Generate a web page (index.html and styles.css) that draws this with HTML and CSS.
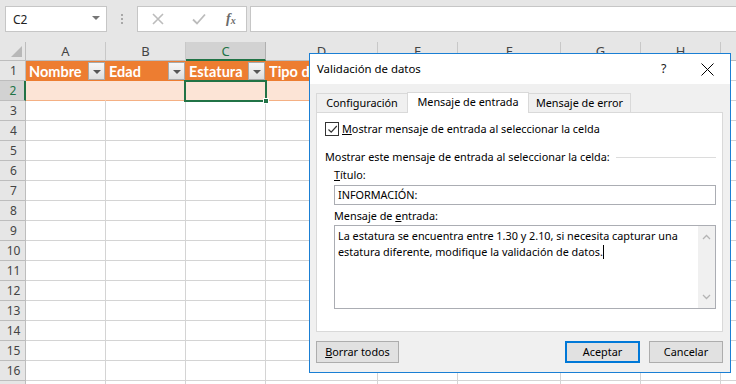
FILE: index.html
```html
<!DOCTYPE html>
<html lang="es">
<head>
<meta charset="utf-8">
<title>Validación de datos</title>
<link rel="stylesheet" href="styles.css">
</head>
<body>
<div class="app">
  <div class="toolbar">
    <div class="namebox"><span>C2</span><span class="nb-arrow"></span></div>
    <div class="dots"><i></i><i></i><i></i></div>
    <div class="fxbox">
      <svg class="ic-x" width="12" height="12" viewBox="0 0 12 12"><path d="M1 1L11 11M11 1L1 11" stroke="#bcbcbc" stroke-width="1.6" fill="none"/></svg>
      <svg class="ic-ok" width="14" height="12" viewBox="0 0 14 12"><path d="M1 6.5L5 10.5L13 1.5" stroke="#bcbcbc" stroke-width="1.8" fill="none"/></svg>
      <span class="fx">f<sub>x</sub></span>
    </div>
    <div class="formula"></div>
  </div>

  <div class="sheet">
    <div class="row hdr">
      <div class="rh corner"><span class="tri"></span></div>
      <div class="c ca">A</div><div class="c cb">B</div><div class="c cc sel">C</div><div class="c cd">D</div><div class="c ce">E</div><div class="c cf">F</div><div class="c cg">G</div><div class="c chh">H</div><div class="c ci"></div>
    </div>
    <div class="row r1">
      <div class="rh">1</div>
      <div class="c ca th"><span>Nombre</span><span class="fbtn"></span></div>
      <div class="c cb th"><span>Edad</span><span class="fbtn"></span></div>
      <div class="c cc th"><span>Estatura</span><span class="fbtn"></span></div>
      <div class="c cd th"><span>Tipo de</span><span class="fbtn"></span></div>
      <div class="c ce"></div><div class="c cf"></div><div class="c cg"></div><div class="c chh"></div><div class="c ci"></div>
    </div>
    <div class="row r2">
      <div class="rh rsel">2</div>
      <div class="c ca td"></div><div class="c cb td"></div><div class="c cc td"></div><div class="c cd td"></div>
      <div class="c ce"></div><div class="c cf"></div><div class="c cg"></div><div class="c chh"></div><div class="c ci"></div>
    </div>
    <div class="row"><div class="rh">3</div><div class="c ca"></div><div class="c cb"></div><div class="c cc"></div><div class="c cd"></div><div class="c ce"></div><div class="c cf"></div><div class="c cg"></div><div class="c chh"></div><div class="c ci"></div></div>
    <div class="row"><div class="rh">4</div><div class="c ca"></div><div class="c cb"></div><div class="c cc"></div><div class="c cd"></div><div class="c ce"></div><div class="c cf"></div><div class="c cg"></div><div class="c chh"></div><div class="c ci"></div></div>
    <div class="row"><div class="rh">5</div><div class="c ca"></div><div class="c cb"></div><div class="c cc"></div><div class="c cd"></div><div class="c ce"></div><div class="c cf"></div><div class="c cg"></div><div class="c chh"></div><div class="c ci"></div></div>
    <div class="row"><div class="rh">6</div><div class="c ca"></div><div class="c cb"></div><div class="c cc"></div><div class="c cd"></div><div class="c ce"></div><div class="c cf"></div><div class="c cg"></div><div class="c chh"></div><div class="c ci"></div></div>
    <div class="row"><div class="rh">7</div><div class="c ca"></div><div class="c cb"></div><div class="c cc"></div><div class="c cd"></div><div class="c ce"></div><div class="c cf"></div><div class="c cg"></div><div class="c chh"></div><div class="c ci"></div></div>
    <div class="row"><div class="rh">8</div><div class="c ca"></div><div class="c cb"></div><div class="c cc"></div><div class="c cd"></div><div class="c ce"></div><div class="c cf"></div><div class="c cg"></div><div class="c chh"></div><div class="c ci"></div></div>
    <div class="row"><div class="rh">9</div><div class="c ca"></div><div class="c cb"></div><div class="c cc"></div><div class="c cd"></div><div class="c ce"></div><div class="c cf"></div><div class="c cg"></div><div class="c chh"></div><div class="c ci"></div></div>
    <div class="row"><div class="rh">10</div><div class="c ca"></div><div class="c cb"></div><div class="c cc"></div><div class="c cd"></div><div class="c ce"></div><div class="c cf"></div><div class="c cg"></div><div class="c chh"></div><div class="c ci"></div></div>
    <div class="row"><div class="rh">11</div><div class="c ca"></div><div class="c cb"></div><div class="c cc"></div><div class="c cd"></div><div class="c ce"></div><div class="c cf"></div><div class="c cg"></div><div class="c chh"></div><div class="c ci"></div></div>
    <div class="row"><div class="rh">12</div><div class="c ca"></div><div class="c cb"></div><div class="c cc"></div><div class="c cd"></div><div class="c ce"></div><div class="c cf"></div><div class="c cg"></div><div class="c chh"></div><div class="c ci"></div></div>
    <div class="row"><div class="rh">13</div><div class="c ca"></div><div class="c cb"></div><div class="c cc"></div><div class="c cd"></div><div class="c ce"></div><div class="c cf"></div><div class="c cg"></div><div class="c chh"></div><div class="c ci"></div></div>
    <div class="row"><div class="rh">14</div><div class="c ca"></div><div class="c cb"></div><div class="c cc"></div><div class="c cd"></div><div class="c ce"></div><div class="c cf"></div><div class="c cg"></div><div class="c chh"></div><div class="c ci"></div></div>
    <div class="row"><div class="rh">15</div><div class="c ca"></div><div class="c cb"></div><div class="c cc"></div><div class="c cd"></div><div class="c ce"></div><div class="c cf"></div><div class="c cg"></div><div class="c chh"></div><div class="c ci"></div></div>
    <div class="row"><div class="rh">16</div><div class="c ca"></div><div class="c cb"></div><div class="c cc"></div><div class="c cd"></div><div class="c ce"></div><div class="c cf"></div><div class="c cg"></div><div class="c chh"></div><div class="c ci"></div></div>
    <div class="row"><div class="rh"></div><div class="c ca"></div><div class="c cb"></div><div class="c cc"></div><div class="c cd"></div><div class="c ce"></div><div class="c cf"></div><div class="c cg"></div><div class="c chh"></div><div class="c ci"></div></div>

    <div class="active"><span class="handle"></span></div>
  </div>

  <div class="dialog">
    <div class="dtitle">
      <span class="dt-text">Validación de datos</span>
      <span class="dt-help">?</span>
      <svg class="dt-close" width="13" height="13" viewBox="0 0 13 13"><path d="M0.5 0.5L12.5 12.5M12.5 0.5L0.5 12.5" stroke="#000" stroke-width="1" fill="none"/></svg>
    </div>
    <div class="dbody">
      <div class="tabs">
        <div class="tab t1">Configuración</div>
        <div class="tab t2 on">Mensaje de entrada</div>
        <div class="tab t3">Mensaje de error</div>
      </div>
      <div class="panel">
        <div class="chkrow">
          <span class="chk"><svg width="11" height="11" viewBox="0 0 11 11"><path d="M1.5 5.5L4.2 8.2L9.8 2" stroke="#333" stroke-width="1.2" fill="none"/></svg></span>
          <span><u>M</u>ostrar mensaje de entrada al seleccionar la celda</span>
        </div>
        <div class="group"><span>Mostrar este mensaje de entrada al seleccionar la celda:</span><span class="gline"></span></div>
        <div class="lbl"><u>T</u>ítulo:</div>
        <div class="input">INFORMACIÓN:</div>
        <div class="lbl">Mensaje de <u>e</u>ntrada:</div>
        <div class="textarea">
          <div class="ta-text">La estatura se encuentra entre 1.30 y 2.10, si necesita capturar una estatura diferente, modifique la validación de datos.<span class="caret"></span></div>
          <div class="scroll">
            <svg width="9" height="6" viewBox="0 0 9 6"><path d="M1 5L4.5 1.5L8 5" stroke="#b4b4b4" stroke-width="1.3" fill="none"/></svg>
            <svg width="9" height="6" viewBox="0 0 9 6"><path d="M1 1L4.5 4.5L8 1" stroke="#b4b4b4" stroke-width="1.3" fill="none"/></svg>
          </div>
        </div>
      </div>
      <div class="buttons">
        <div class="btn b-clear"><span><u>B</u>orrar todos</span></div>
        <div class="spacer"></div>
        <div class="btn b-ok">Aceptar</div>
        <div class="btn b-cancel">Cancelar</div>
      </div>
    </div>
  </div>
</div>
</body>
</html>
```
FILE: styles.css
```css
* { box-sizing: border-box; }
html, body { margin: 0; padding: 0; }
body { width: 736px; height: 384px; overflow: hidden; background: #fff; font-family: "Noto Sans", sans-serif; }
.app { position: relative; width: 736px; height: 384px; overflow: hidden; }

/* toolbar */
.toolbar { height: 42px; background: #e6e6e6; display: flex; align-items: flex-start; padding-top: 6px; padding-left: 5px; }
.namebox { width: 102px; height: 26px; background: #fff; border: 1px solid #c6c6c6; display: flex; align-items: center; justify-content: space-between; padding: 0 6px 0 7px; font-size: 12px; color: #222; }
.nb-arrow { width: 0; height: 0; border-left: 4px solid transparent; border-right: 4px solid transparent; border-top: 4px solid #767676; margin-bottom: 3px; }
.dots { width: 30px; height: 26px; display: flex; flex-direction: column; align-items: center; justify-content: center; gap: 2px; }
.dots i { display: block; width: 2px; height: 2px; background: #a8a8a8; }
.fxbox { width: 110px; height: 26px; background: #fff; border: 1px solid #c6c6c6; display: flex; align-items: center; padding-left: 14px; }
.ic-x { margin-right: 28px; }
.ic-ok { margin-right: 20px; }
.fx { font-family: "Liberation Serif", serif; font-style: italic; font-size: 14px; color: #6a6a6a; font-weight: bold; }
.fx sub { font-size: 10px; vertical-align: -1px; }
.formula { flex: 1; height: 26px; background: #fff; border: 1px solid #c6c6c6; border-right: none; margin-left: 3px; }

/* sheet */
.sheet { position: relative; }
.row { display: flex; height: 20px; }
.row.hdr { height: 19px; }
.rh { width: 26px; flex: none; background: #e6e6e6; border-right: 1px solid #bdbdbd; border-bottom: 1px solid #bdbdbd; font-size: 12px; color: #444; display: flex; align-items: center; justify-content: center; padding-left: 2px; }
.c { flex: none; border-right: 1px solid #d4d4d4; border-bottom: 1px solid #d4d4d4; height: 100%; }
.ca, .cb, .cc, .ce, .cg, .chh, .ci { width: 80px; }
.cd { width: 112px; }
.cf { width: 103px; }
.hdr .c { background: #e6e6e6; border-right: 1px solid #c8c8c8; border-bottom: 1px solid #bdbdbd; font-size: 13px; color: #444; display: flex; align-items: center; justify-content: center; }
.hdr .c.sel { background: #d2d2d2; color: #217346; border-bottom: 2px solid #217346; border-right-color: #b0b0b0; }
.corner { position: relative; }
.tri { position: absolute; right: 3px; bottom: 3px; width: 0; height: 0; border-left: 11px solid transparent; border-bottom: 11px solid #b8b8b8; }
.rsel { background: #d2d2d2; color: #217346; border-right: 2px solid #217346; }

.th { background: #ed7d31; border-right-color: #ed7d31; border-bottom: none; color: #fff; font-family: Lato, sans-serif; font-weight: bold; font-size: 14.5px; display: flex; align-items: center; justify-content: space-between; padding-left: 3px; padding-right: 0; overflow: hidden; white-space: nowrap; }
.th span:first-child { overflow: hidden; }
.fbtn { flex: none; position: relative; width: 17px; height: 18px; margin-right: 0; background: linear-gradient(#f7f7f7, #dedede); border: 1px solid #a9a9a9; }
.fbtn::after { content: ""; position: absolute; left: 4px; top: 7px; width: 0; height: 0; border-left: 4px solid transparent; border-right: 4px solid transparent; border-top: 4px solid #555; }
.td { background: #fce4d6; border-right-color: #fce4d6; border-bottom: 1px solid #f4b084; }

.active { position: absolute; left: 184px; top: 38px; width: 83px; height: 22px; border: 2px solid #217346; }
.handle { position: absolute; right: -4px; bottom: -4px; width: 6px; height: 6px; background: #217346; border: 1px solid #fff; }

/* dialog */
.dialog { position: absolute; left: 309px; top: 53px; width: 422px; height: 320px; border: 1px solid #1a7fd4; background: #f0f0f0; font-family: "Noto Sans", sans-serif; font-size: 10.85px; color: #000; line-height: 16px; }
.dtitle { height: 30px; background: #fff; display: flex; align-items: center; padding-left: 7px; }
.dt-text { flex: 1; font-size: 11.4px; }
.dt-help { width: 40px; font-size: 12.5px; color: #222; }
.dt-close { margin-right: 16px; }
.dbody { padding: 7px 7px 0 6px; }
.tabs { display: flex; align-items: flex-end; height: 21px; }
.tab { height: 19px; border: 1px solid #d9d9d9; border-bottom: none; display: flex; align-items: center; justify-content: center; background: #f0f0f0; }
.t1 { width: 91px; border-right: none; }
.t2 { width: 122px; }
.t3 { width: 102px; border-left: none; }
.tab.on { height: 21px; background: #fff; position: relative; top: 1px; padding-bottom: 3px; margin-top: -1px; }
.panel { height: 220px; background: #fff; border: 1px solid #d9d9d9; padding: 9px 6px 0 8px; }
.chkrow { display: flex; align-items: center; height: 14px; }
.chk { width: 14px; height: 14px; border: 1px solid #333; background: #fff; display: flex; align-items: center; justify-content: center; margin-right: 3px; }
.group { display: flex; align-items: center; margin-top: 13px; height: 16px; }
.gline { flex: 1; height: 1px; background: #dcdcdc; margin-left: 6px; }
.lbl { margin-left: 9px; height: 16px; margin-top: 2px; }
.input { margin-left: 9px; margin-top: 2px; height: 20px; width: 382px; border: 1px solid #abadb3; padding-left: 3px; display: flex; align-items: center; }
.input + .lbl { margin-top: 3px; }
.textarea { margin-left: 9px; margin-top: 1px; height: 84px; width: 382px; border: 1px solid #abadb3; display: flex; }
.ta-text { flex: 1; padding: 2px 4px 0 3px; line-height: 16px; }
.caret { display: inline-block; width: 1px; height: 14px; background: #000; vertical-align: -3px; }
.scroll { width: 17px; background: #f0f0f0; display: flex; flex-direction: column; align-items: center; justify-content: space-between; padding: 8px 0 8px; }
.buttons { display: flex; margin-top: 9px; }
.btn { height: 22px; border: 1px solid #adadad; background: #e1e1e1; display: flex; align-items: center; justify-content: center; }
.b-clear { width: 83px; }
.spacer { flex: 1; }
.b-ok { width: 75px; border: 2px solid #0078d7; margin-right: 9px; }
.b-cancel { width: 74px; }
```
